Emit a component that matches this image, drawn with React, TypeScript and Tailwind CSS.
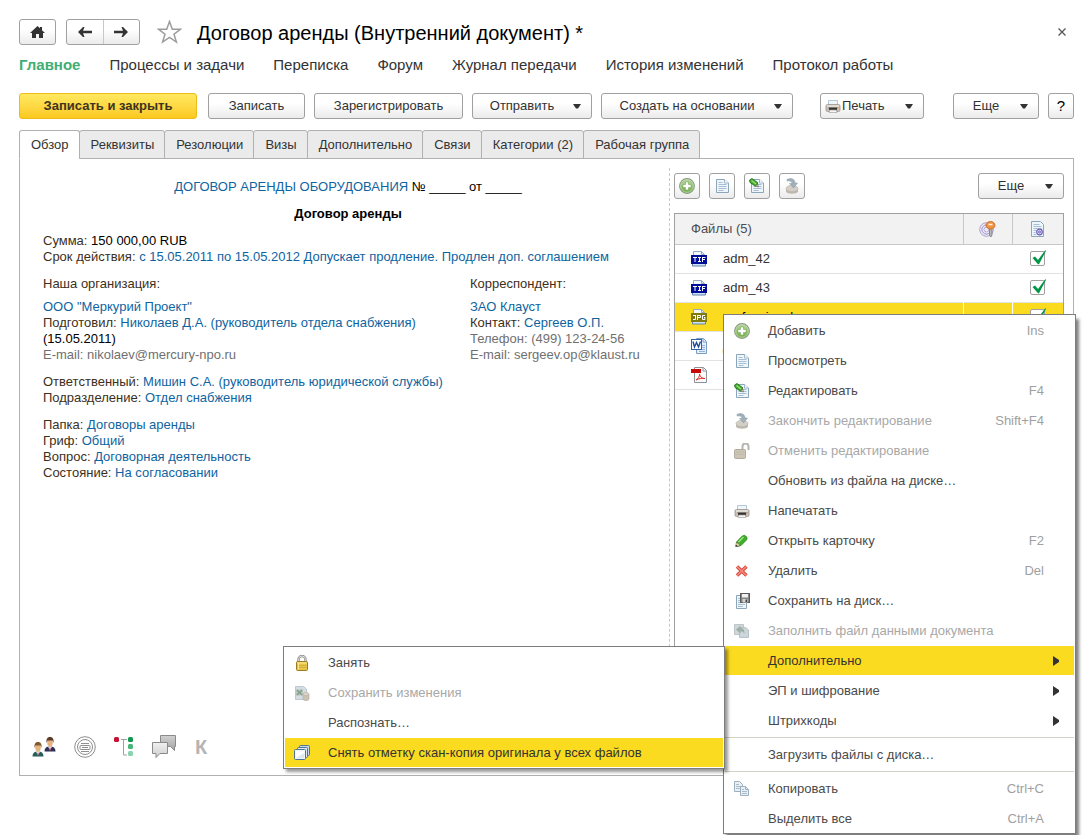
import type { ReactNode } from 'react'

const FONT = 'font-[Liberation_Sans,Arial,sans-serif]'
const BUTTON = 'h-[26px] shrink-0 rounded-[3px] border border-[#a0a0a0] bg-linear-to-b from-white from-40% to-[#ebebeb] text-[#333333] flex items-center justify-center'

interface MenuEntry {
    label: string
    icon?: ReactNode
    shortcut?: string
    disabled?: boolean
    active?: boolean
    children?: MenuEntry[]
    hasMore?: boolean
    separated?: boolean
}

function Caret() {
    return (
        <svg width="8" height="5" viewBox="0 0 8 5">
            <path d="M0 0h8L5 4.5H3z" fill="#333" />
        </svg>
    )
}

function DropButton({ label, className, icon }: { label: string; className: string; icon?: ReactNode }) {
    return (
        <button className={`${BUTTON} ${className}`}>
            {icon}
            <span className={`grow ${icon ? 'ml-px text-left' : 'mr-[10px] text-center'}`}>{label}</span>
            <Caret />
        </button>
    )
}

function AddIcon() {
    return (
        <svg width="16" height="16" viewBox="0 0 16 16">
            <defs>
                <linearGradient id="addFill" x1="0" y1="0" x2="0" y2="1">
                    <stop offset="0" stopColor="#b9d8a0" />
                    <stop offset="1" stopColor="#6cab42" />
                </linearGradient>
            </defs>
            <circle cx="8" cy="8" r="7.4" fill="url(#addFill)" stroke="#8c9a84" strokeWidth="1.1" />
            <circle cx="8" cy="8" r="6.3" fill="none" stroke="#c8e0b4" strokeWidth=".7" />
            <path d="M6.5 4h3v2.5H12v3H9.5V12h-3V9.5H4v-3h2.5z" fill="#fff" stroke="#6f9d50" strokeWidth=".5" />
        </svg>
    )
}

function Sheet() {
    return (
        <g transform="translate(2 1)">
            <path d="M.5.5h8L12.5 4v9.5H.5z" fill="#eef5fb" stroke="#8ba6b9" />
            <path d="M8.5.5V4h4" fill="#fff" stroke="#9eb5c5" />
            <path d="M2.5 3.5h4M2.5 5.5h8M2.5 7.5h8M2.5 9.5h8M2.5 11.5h5" stroke="#a6bfd4" />
        </g>
    )
}

function PageIcon() {
    return (
        <svg width="16" height="16" viewBox="0 0 16 16">
            <Sheet />
        </svg>
    )
}

function EditIcon() {
    return (
        <svg width="16" height="16" viewBox="0 0 16 16">
            <Sheet />
            <path d="M.5 2L3 .5l5.5 4v3L6 8 1 4.5z" fill="#41a92b" stroke="#1e6f18" strokeWidth=".8" />
            <path d="M2.5 2.5L7 6" stroke="#9be37c" strokeWidth="1.2" />
            <path d="M6.5 8L9.5 9 8.7 6z" fill="#e9dca5" stroke="#444" strokeWidth=".5" />
        </svg>
    )
}

function FinishIcon() {
    return (
        <svg width="16" height="16" viewBox="0 0 16 16">
            <path d="M2 10.5v3C3 16.500 13 16.500 14 13.500v-3z" fill="#bdb8ad" />
            <ellipse cx="8" cy="10.5" rx="6" ry="3.2" fill="#d3cfc6" stroke="#b7b2a7" strokeWidth=".6" />
            <path d="M3 1.5C7-.5 11 1 11 5h2.500L9.500 10 5.500 5.500H8C8 3.500 6 2.500 3 3z" fill="#9fb0bb" stroke="#8798a3" strokeWidth=".5" />
        </svg>
    )
}

function UnlockIcon() {
    return (
        <svg width="16" height="16" viewBox="0 0 16 16">
            <path d="M8.5 6.5v-3a3 3 0 0 1 6 0V7" fill="none" stroke="#b7b5b0" strokeWidth="2" />
            <rect x=".5" y="6.5" width="11" height="9" rx="1" fill="#ccc5b6" stroke="#b3ac9e" />
            <path d="M1.5 9h9M1.5 11.5h9" stroke="#bfb8aa" strokeWidth=".8" />
        </svg>
    )
}

function LockIcon() {
    return (
        <svg width="16" height="16" viewBox="0 0 16 16">
            <path d="M4.5 7V4.5a3.500 3.500 0 0 1 7 0V7" fill="none" stroke="#8b8b8b" strokeWidth="2.4" />
            <path d="M4.5 7V4.5a3.500 3.500 0 0 1 7 0V7" fill="none" stroke="#dedede" />
            <rect x="2.5" y="6.5" width="11" height="9" rx="1" fill="#e8c648" stroke="#a07a20" />
            <path d="M3.5 8h9" stroke="#fbee9e" />
            <path d="M3.5 10.5h9M3.5 12.5h9" stroke="#d2aa38" strokeWidth=".8" />
            <path d="M4.5 7.5v7" stroke="#fbe98c" />
        </svg>
    )
}

function PrinterIcon() {
    return (
        <svg width="16" height="16" viewBox="0 0 16 16" className="shrink-0">
            <path d="M3.5 7V2.500h9V7" fill="#eef6fb" stroke="#b4c8d6" />
            <rect x="1" y="6.500" width="14" height="7" rx="1.500" fill="#c9c2bb" stroke="#9a938d" strokeWidth=".8" />
            <path d="M2 8h12" stroke="#f2eeea" strokeWidth="1.200" />
            <path d="M3.500 9.500h9l-1 3.500h-7z" fill="#3a3532" />
            <path d="M4.500 12h7l.5 2.500H4z" fill="#f5f5f5" stroke="#9a938d" strokeWidth=".6" />
            <path d="M12.500 9.500H14" stroke="#e39a52" />
        </svg>
    )
}

function PencilIcon() {
    return (
        <svg width="16" height="16" viewBox="0 0 16 16">
            <path d="M2.500 9L8 3.200l2.500-.9 2.500 2-.3 2.500L7 12.500 3 13.500z" fill="#3fae2a" stroke="#24801a" strokeWidth=".8" />
            <path d="M4.500 9L9.500 4" stroke="#9fe585" strokeWidth="1.500" />
            <path d="M2.300 9.500l-.6 4L6 12.700 4.500 10.500z" fill="#e7d9a8" stroke="#5c5434" strokeWidth=".5" />
            <path d="M1.500 13.700l.4-2 1.700 1.500z" fill="#222" />
        </svg>
    )
}

function DeleteIcon() {
    return (
        <svg width="16" height="16" viewBox="0 0 16 16">
            <path d="M3 3.500l9.500 9M12.500 3.500l-9.500 9" stroke="#d5443a" strokeWidth="3.400" />
            <path d="M3 3.500l9.500 9M12.500 3.500l-9.500 9" stroke="#f58b7d" strokeWidth="1.700" />
        </svg>
    )
}

function SaveDiskIcon() {
    return (
        <svg width="16" height="16" viewBox="0 0 16 16">
            <path d="M2.500 2.500h10v13h-10z" fill="#eef5fb" stroke="#8ba6b9" />
            <path d="M4 5.500h3M4 7.500h3M4 9.500h7M4 11.500h7M4 13.500h5" stroke="#a6bfd4" />
            <rect x="6.500" y=".5" width="9" height="9" fill="#858585" stroke="#5a5a5a" />
            <rect x="8" y="1" width="6" height="3.500" fill="#f1f1f1" />
            <rect x="8.500" y="6" width="5" height="3.500" fill="#d4d4d4" />
            <rect x="11.500" y="6.500" width="1.500" height="2.500" fill="#444" />
        </svg>
    )
}

function FillIcon() {
    return (
        <svg width="16" height="16" viewBox="0 0 16 16">
            <path d="M.5 1.500h9v10h-9z" fill="#d0d6d9" stroke="#bcc5ca" />
            <path d="M5.500 4.500h6L14.500 7v7.500h-9z" fill="#ccd5da" stroke="#b5c1c8" />
            <path d="M2 6.500L6.500 2.500V5c3 0 4 2 4 6-1-2-2-2.800-4-2.800v2.600z" fill="#9db0a5" />
        </svg>
    )
}

function CopyIcon() {
    return (
        <svg width="16" height="16" viewBox="0 0 16 16">
            <path d="M.5.5h5l3 3v7h-8z" fill="#e8eff5" stroke="#9db0bf" />
            <path d="M2 3.500h3M2 5.500h5M2 7.500h5" stroke="#a9bccc" />
            <path d="M6.500 5.500h5l3 3v6h-8z" fill="#e8eff5" stroke="#9db0bf" />
            <path d="M11.500 5.500v3h3" fill="none" stroke="#9db0bf" />
            <path d="M8 8.500h2M8 10.500h5M8 12.500h5" stroke="#a9bccc" />
        </svg>
    )
}

function SaveChangesIcon() {
    return (
        <svg width="16" height="16" viewBox="0 0 16 16">
            <path d="M1.500 1.500h8L12.500 4v10.500h-11z" fill="#d3dde3" stroke="#bac8d0" />
            <path d="M2 4.500h7v6H2z" fill="#b6c6bb" />
            <path d="M3 5l5 5M8 5l-5 5" stroke="#839c8a" strokeWidth="1.300" />
            <path d="M9 9v5c0 2 6 2 6 0V9z" fill="#cbc2b6" stroke="#b6ac9f" strokeWidth=".6" />
            <ellipse cx="12" cy="9" rx="3" ry="1.500" fill="#dfd8ce" stroke="#b6ac9f" strokeWidth=".6" />
        </svg>
    )
}

function StackIcon() {
    return (
        <svg width="16" height="16" viewBox="0 0 16 16">
            <rect x="5.500" y=".5" width="10" height="10" rx="1" fill="#c7d9e6" stroke="#4e7596" />
            <rect x="3.500" y="2.500" width="10" height="10" rx="1" fill="#dbe7f0" stroke="#4e7596" />
            <rect x=".5" y="4.500" width="11" height="10" rx="1" fill="#f1f5f8" stroke="#4e7596" />
            <rect x="2" y="6" width="8" height="7" fill="#fff" />
            <path d="M2 13h8V8z" fill="#e0e8ee" />
        </svg>
    )
}

function ImageFileIcon({ kind }: { kind: 'TIF' | 'JPG' }) {
    const fill = kind === 'TIF' ? '#000d96' : '#7f7b0c'
    return (
        <svg width="16" height="16" viewBox="0 0 16 16">
            <path d="M2.500 5V.5h8l3 3V5" fill="#f3f8fc" stroke="#93aabd" />
            <path d="M10.500.5v3h3" fill="none" stroke="#93aabd" />
            <path d="M1.500 12v3h13v-3" fill="#cfe2f3" stroke="#5f84aa" />
            <rect y="4" width="16" height="9" fill={fill} />
            {kind === 'TIF' ? (
                <path d="M2 6.500h4M4 6v5M7 6.500h3M8.500 6v5M7 10.500h3M11.500 6v5M11 6.500h3.500M11 8.500h3" stroke="#fff" />
            ) : (
                <path d="M2 6.500h3M4.500 6v4.500H2M6.500 11V6M6.500 6.500h3v2H7M14 6.500h-2.500v4H14v-2h-1" fill="none" stroke="#fff" />
            )}
        </svg>
    )
}

function WordIcon() {
    return (
        <svg width="16" height="16" viewBox="0 0 16 16">
            <path d="M5.500.5h7l3 3v12h-10z" fill="#e6f0fb" stroke="#7c9cc4" />
            <path d="M12 1v3h3" fill="none" stroke="#7c9cc4" />
            <path d="M8 7.500h6M8 9.500h6M8 11.500h6M8 13.500h6" stroke="#92b2da" />
            <rect x=".5" y="1.500" width="10" height="10" fill="#fff" stroke="#3561a7" />
            <path d="M2 3.500L3.500 9l2-4.500 2 4.500 2-5.500" fill="none" stroke="#1e4b9b" strokeWidth="1.400" />
        </svg>
    )
}

function PdfIcon() {
    return (
        <svg width="16" height="16" viewBox="0 0 16 16">
            <path d="M3.500.5h9l3 3v12h-12z" fill="#fbfbfb" stroke="#8d9399" />
            <path d="M12 1v3h3" fill="#fff" stroke="#8d9399" />
            <rect y="2" width="10" height="4" fill="#c80a0a" />
            <path d="M5 13c2-1 4-4 3.500-6 .5 3 3 5 5.500 4.500-2-.8-6 0-9 1.500z" fill="none" stroke="#e42a2a" />
        </svg>
    )
}

function KeyIcon() {
    return (
        <svg width="17" height="16" viewBox="0 0 17 16">
            <circle cx="7.500" cy="8.500" r="6.800" fill="#eeebf6" stroke="#aaa0cf" />
            <circle cx="7.500" cy="8.500" r="4.600" fill="none" stroke="#9b90c7" />
            <circle cx="7.500" cy="8.500" r="2.500" fill="none" stroke="#b6add6" />
            <path d="M10.500 7H13v7l-1.200 2-1.300-2z" fill="#b9b9b9" stroke="#6e6e6e" strokeWidth=".7" />
            <ellipse cx="11.500" cy="4.300" rx="4.500" ry="3.800" fill="#ee9246" stroke="#c3641f" strokeWidth=".8" />
            <path d="M9.500 3.500h4" stroke="#fff0dd" strokeWidth="1.500" />
        </svg>
    )
}

function SealedPageIcon() {
    return (
        <svg width="16" height="16" viewBox="0 0 16 16">
            <path d="M1.500.5h9l3 3v12h-12z" fill="#eef5fb" stroke="#8ba6b9" />
            <path d="M3.500 3.500h6M3.500 5.500h8M3.500 7.500h8M3.500 9.500h3M3.500 11.500h2M3.500 13.500h3" stroke="#a6bfd4" />
            <circle cx="9.500" cy="11" r="2.800" fill="#e5e0f5" stroke="#6d5fb8" strokeWidth="1.200" />
            <circle cx="9.500" cy="11" r="1" fill="none" stroke="#6d5fb8" />
        </svg>
    )
}

function PeopleIcon() {
    const person = (suit: string, hair: string) => (
        <>
            <path d="M.5 14.500c0-3 1.500-4.500 4-5h3c2.500.5 4 2 4 5z" fill={suit} />
            <path d="M4 9.500l2 4 2-4z" fill="#fff" />
            <path d="M6 10.500v3" stroke="#b33" />
            <ellipse cx="6" cy="5.500" rx="2.800" ry="4" fill="#e6b27e" />
            <path d="M2.500 6C2 1 4 0 6 0s4.200 1 3.500 6l-1-2.500h-5z" fill={hair} />
        </>
    )
    return (
        <svg width="24" height="20" viewBox="0 0 24 20">
            <g transform="translate(12 0)">{person('#2c2f56', '#5b3a28')}</g>
            <g transform="translate(0 5)">{person('#235f5d', '#805a2e')}</g>
        </svg>
    )
}

function StampIcon() {
    return (
        <svg width="22" height="22" viewBox="0 0 22 22" fill="none" stroke="#8f8f8f">
            <circle cx="11" cy="11" r="10.300" />
            <circle cx="11" cy="11" r="7.500" />
            <rect x="6" y="9.500" width="10" height="4" rx="1" fill="#fff" />
            <path d="M7 7.500h8M7 15.500h8M8 11.500h6" />
        </svg>
    )
}

function TreeIcon() {
    return (
        <svg width="20" height="20" viewBox="0 0 20 20">
            <path d="M7 2.500h6M9.500 2.500v15.500H13" fill="none" stroke="#a0a0a0" />
            <rect width="5" height="5" rx="1.500" fill="#c4122f" />
            <rect x="14" width="5" height="5" rx="1.500" fill="#109a50" />
            <rect x="14" y="7" width="5" height="5" rx="1.500" fill="#46b67b" />
            <rect x="14" y="14" width="5" height="5" rx="1.500" fill="#8bd3ae" />
        </svg>
    )
}

function ChatIcon() {
    return (
        <svg width="25" height="24" viewBox="0 0 25 24">
            <defs>
                <linearGradient id="chatBack" x1="0" y1="0" x2="0" y2="1">
                    <stop offset="0" stopColor="#d0d0d0" />
                    <stop offset="1" stopColor="#a4a4a4" />
                </linearGradient>
                <linearGradient id="chatFront" x1="0" y1="0" x2="0" y2="1">
                    <stop offset="0" stopColor="#f0f0f0" />
                    <stop offset="1" stopColor="#cfcfcf" />
                </linearGradient>
            </defs>
            <path d="M8.500.5h15v11h-1v4l-4-4h-10z" fill="url(#chatBack)" stroke="#8a8a8a" />
            <path d="M.5 7.500h15v11H8l-4 4v-4H.5z" fill="url(#chatFront)" stroke="#8a8a8a" />
        </svg>
    )
}

const SUBMENU: MenuEntry[] = [
    { label: 'Занять', icon: <LockIcon /> },
    { label: 'Сохранить изменения', icon: <SaveChangesIcon />, disabled: true },
    { label: 'Распознать…' },
    { label: 'Снять отметку скан-копия оригинала у всех файлов', icon: <StackIcon />, active: true },
]

const MENU: MenuEntry[] = [
    { label: 'Добавить', icon: <AddIcon />, shortcut: 'Ins' },
    { label: 'Просмотреть', icon: <PageIcon /> },
    { label: 'Редактировать', icon: <EditIcon />, shortcut: 'F4' },
    { label: 'Закончить редактирование', icon: <FinishIcon />, shortcut: 'Shift+F4', disabled: true },
    { label: 'Отменить редактирование', icon: <UnlockIcon />, disabled: true },
    { label: 'Обновить из файла на диске…' },
    { label: 'Напечатать', icon: <PrinterIcon /> },
    { label: 'Открыть карточку', icon: <PencilIcon />, shortcut: 'F2' },
    { label: 'Удалить', icon: <DeleteIcon />, shortcut: 'Del' },
    { label: 'Сохранить на диск…', icon: <SaveDiskIcon /> },
    { label: 'Заполнить файл данными документа', icon: <FillIcon />, disabled: true },
    { label: 'Дополнительно', active: true, hasMore: true, children: SUBMENU },
    { label: 'ЭП и шифрование', hasMore: true },
    { label: 'Штрихкоды', hasMore: true },
    { label: 'Загрузить файлы с диска…', separated: true },
    { label: 'Копировать', icon: <CopyIcon />, shortcut: 'Ctrl+C', separated: true },
    { label: 'Выделить все', shortcut: 'Ctrl+A' },
]

function MenuRow({ item }: { item: MenuEntry }) {
    return (
        <li className={`relative ${item.separated ? 'mt-1' : ''}`}>
            {item.separated && <hr className="absolute -top-0.5 inset-x-0 border-[#d3d3c8]" />}
            <div className="pt-px">
                <button
                    disabled={item.disabled}
                    className={`flex h-[29px] w-full items-center pr-[15px] pl-[9px] text-left ${item.active ? 'bg-[#fbdb20] text-[#333333]' : item.disabled ? 'text-[#a8a8a8]' : 'text-[#4a4a4a]'}`}
                >
                    <span className="mr-[18px] w-4 shrink-0">{item.icon}</span>
                    <span className="grow whitespace-nowrap">{item.label}</span>
                    {item.shortcut && <span className="pr-[15px] text-[#a0a0a0]">{item.shortcut}</span>}
                    {item.hasMore && (
                        <svg width="6" height="10" viewBox="0 0 6 10">
                            <path d="M0 0l6 4v2l-6 4z" fill="#333" />
                        </svg>
                    )}
                </button>
            </div>
            {item.children && (
                <Menu items={item.children} className="top-px right-full w-[442px] pb-px shadow-[3px_3px_3px_rgba(0,0,0,0.4)]" />
            )}
        </li>
    )
}

function Menu({ items, className }: { items: MenuEntry[]; className: string }) {
    return (
        <ul className={`absolute z-10 border border-[#7d7d7d] bg-white px-px ${className}`}>
            {items.map((item) => (
                <MenuRow key={item.label} item={item} />
            ))}
        </ul>
    )
}

const FILES = [
    { name: 'adm_42', icon: <ImageFileIcon kind="TIF" />, original: true },
    { name: 'adm_43', icon: <ImageFileIcon kind="TIF" />, original: true },
    { name: 'professional', icon: <ImageFileIcon kind="JPG" />, original: true, selected: true },
    { name: 'Договор', icon: <WordIcon />, original: false },
    { name: 'Приложение', icon: <PdfIcon />, original: false },
]

function FilesTable() {
    return (
        <div className="grow border border-[#a0a0a0]">
            <table className="w-full table-fixed border-collapse">
                <thead>
                    <tr className="h-[30px] border-b border-[#c8c8c8] bg-[#f2f2f2] text-[#4d4d4d]">
                        <th className="pl-4 text-left font-normal">Файлы (5)</th>
                        <th className="w-[49px] border-l border-[#c8c8c8]">
                            <span className="flex justify-center"><KeyIcon /></span>
                        </th>
                        <th className="w-[51px] border-l border-[#c8c8c8]">
                            <span className="flex justify-center"><SealedPageIcon /></span>
                        </th>
                    </tr>
                </thead>
                <tbody>
                    {FILES.map((file) => (
                        <tr key={file.name} className={`h-[29px] border-b border-[#e2e2e2] ${file.selected ? 'bg-[#fbdb20] text-black' : 'text-[#333333]'}`}>
                            <td className="pl-4">
                                <span className="flex items-center gap-4">{file.icon}{file.name}</span>
                            </td>
                            <td className={file.selected ? 'border-l border-white' : ''} />
                            <td className={file.selected ? 'border-l border-white' : ''}>
                                <label className="relative mx-auto block size-4">
                                    <input
                                        type="checkbox"
                                        aria-label={file.name}
                                        defaultChecked={file.original}
                                        className="peer block size-[15px] appearance-none rounded-xs border border-[#a0a0a0] bg-white"
                                    />
                                    <svg width="15" height="15" viewBox="0 0 15 15" className="pointer-events-none absolute bottom-0.5 left-0.5 hidden peer-checked:block">
                                        <path d="M.5 8l2.500-1.500 3 3.500L13 .5h1.200L7 14.200H6z" fill="#009646" />
                                    </svg>
                                </label>
                            </td>
                        </tr>
                    ))}
                </tbody>
            </table>
        </div>
    )
}

function Link({ children }: { children: ReactNode }) {
    return <a href="#" className="text-[#0f649f]">{children}</a>
}

function Overview() {
    return (
        <section className="flex min-w-0 grow flex-col pt-5 pr-4 pb-[14px] pl-[23px] leading-4 text-[#3d2f1a]">
            <p className="text-center text-black">
                <Link>ДОГОВОР АРЕНДЫ ОБОРУДОВАНИЯ</Link> № _____ от _____
            </p>
            <h2 className="mt-[11px] text-center font-bold text-black">Договор аренды</h2>
            <p className="mt-[11px]">Сумма: <span className="text-black">150 000,00 RUB</span></p>
            <p>Срок действия: <Link>с 15.05.2011 по 15.05.2012 Допускает продление. Продлен доп. соглашением</Link></p>
            <div className="mt-[11px] grid grid-cols-[7fr_3fr]">
                <div>
                    <p className="mb-[7px]">Наша организация:</p>
                    <p><Link>ООО "Меркурий Проект"</Link></p>
                    <p>Подготовил: <Link>Николаев Д.А. (руководитель отдела снабжения)</Link></p>
                    <p className="text-black">(15.05.2011)</p>
                    <p className="text-[#707070]">E-mail: nikolaev@mercury-npo.ru</p>
                </div>
                <div>
                    <p className="mb-[7px]">Корреспондент:</p>
                    <p><Link>ЗАО Клауст</Link></p>
                    <p>Контакт: <Link>Сергеев О.П.</Link></p>
                    <p className="text-[#707070]">Телефон: (499) 123-24-56</p>
                    <p className="text-[#707070]">E-mail: sergeev.op@klaust.ru</p>
                </div>
            </div>
            <p className="mt-[11px]">Ответственный: <Link>Мишин С.А. (руководитель юридической службы)</Link></p>
            <p>Подразделение: <Link>Отдел снабжения</Link></p>
            <p className="mt-[11px]">Папка: <Link>Договоры аренды</Link></p>
            <p>Гриф: <Link>Общий</Link></p>
            <p>Вопрос: <Link>Договорная деятельность</Link></p>
            <p>Состояние: <Link>На согласовании</Link></p>
            <div className="mt-auto -ml-[11px] flex items-center gap-[18px]">
                <button aria-label="Участники"><PeopleIcon /></button>
                <button aria-label="Печать"><StampIcon /></button>
                <button aria-label="Структура"><TreeIcon /></button>
                <button aria-label="Форум"><ChatIcon /></button>
                <button className="text-xl font-bold text-[#b4b4b4]">К</button>
            </div>
        </section>
    )
}

const NAV = ['Главное', 'Процессы и задачи', 'Переписка', 'Форум', 'Журнал передачи', 'История изменений', 'Протокол работы']
const TABS = ['Обзор', 'Реквизиты', 'Резолюции', 'Визы', 'Дополнительно', 'Связи', 'Категории (2)', 'Рабочая группа']

export default function App() {
    return (
        <div className={`${FONT} bg-white pt-[19px] pr-[10px] pb-[59px] pl-[19px] text-[13px] text-[#333333]`}>
            <header className="flex h-[26px] items-center">
                <button aria-label="Домой" className={`${BUTTON} w-[37px]`}>
                    <svg width="15" height="12" viewBox="0 0 15 12">
                        <path d="M7.500 0L10 2.300V1h2v3.200L15 7h-2v5H9V8H6v4H2V7H0z" fill="#333" />
                    </svg>
                </button>
                <div className={`${BUTTON} ml-[10px] w-[74px]`}>
                    <button aria-label="Назад" className="flex h-full flex-1 items-center justify-center border-r border-[#c8c8c8]">
                        <svg width="14" height="10" viewBox="0 0 14 10">
                            <path d="M0 5l5-5h1.500L5 3.800h9v2.400H5L6.500 10H5z" fill="#333" />
                        </svg>
                    </button>
                    <button aria-label="Вперед" className="flex h-full flex-1 items-center justify-center">
                        <svg width="14" height="10" viewBox="0 0 14 10">
                            <path d="M14 5L9 0H7.500L9 3.800H0v2.400h9L7.500 10H9z" fill="#333" />
                        </svg>
                    </button>
                </div>
                <button aria-label="В избранное" className="ml-[17px]">
                    <svg width="25" height="24" viewBox="0 0 25 24">
                        <path d="M12.500 1.500l2.800 7.700h8.200l-6.500 5 2.400 7.800-6.900-4.600L5.600 22 8 14.200l-6.500-5h8.200z" fill="#fff" stroke="#9c9c9c" strokeWidth="1.500" />
                    </svg>
                </button>
                <h1 className="ml-[15px] grow pt-0.5 text-xl text-black">Договор аренды (Внутренний документ) *</h1>
                <button aria-label="Закрыть" className="mr-2">
                    <svg width="8" height="8" viewBox="0 0 8 8">
                        <path d="M.5.5l7 7M7.500.5l-7 7" stroke="#555" strokeWidth="1.300" />
                    </svg>
                </button>
            </header>

            <nav className="mt-[10px] flex h-5 items-center gap-[29px] text-[15px]">
                {NAV.map((item, i) => (
                    <a key={item} href="#" className={i === 0 ? 'font-bold text-[#3fae74]' : ''}>{item}</a>
                ))}
            </nav>

            <div className="mt-[18px] flex gap-[9px]">
                <button className="mr-0.5 h-[26px] w-[178px] rounded-[3px] border border-[#eebb1c] bg-linear-to-b from-[#ffe95e] to-[#fbc91c] font-bold text-[#3d3420]">
                    Записать и закрыть
                </button>
                <button className={`${BUTTON} w-[97px]`}>Записать</button>
                <button className={`${BUTTON} w-[149px]`}>Зарегистрировать</button>
                <DropButton label="Отправить" className="w-[120px] pr-[10px] pl-2" />
                <DropButton label="Создать на основании" className="w-[192px] pr-[10px] pl-2" />
                <DropButton label="Печать" className="ml-[18px] w-[104px] pr-[10px] pl-1" icon={<PrinterIcon />} />
                <DropButton label="Еще" className="ml-auto w-[86px] pr-[10px] pl-2" />
                <button className={`${BUTTON} w-[26px] text-[15px] text-black`}>?</button>
            </div>

            <div className="relative z-10 mt-[11px] flex" role="tablist">
                {TABS.map((tab, i) => (
                    <button
                        key={tab}
                        role="tab"
                        aria-selected={i === 0}
                        className={`-mr-px h-[29px] rounded-t-[3px] border border-[#b0b0b0] pr-[10px] pl-[11px] ${i === 0 ? 'border-b-white bg-white' : 'bg-[#ebebeb]'}`}
                    >
                        {tab}
                    </button>
                ))}
            </div>

            <main className="relative -mt-px flex min-h-[618px] border border-[#b0b0b0]">
                <Overview />
                <aside className="mt-[9px] mb-2 flex w-[404px] shrink-0 flex-col border-l border-dashed border-[#c8c8c8] pt-[5px] pr-[9px] pl-1">
                    <div className="mb-[14px] flex gap-[9px]">
                        <button aria-label="Добавить файл" className={`${BUTTON} w-[26px]`}><AddIcon /></button>
                        <button aria-label="Просмотреть файл" className={`${BUTTON} w-[26px]`}><PageIcon /></button>
                        <button aria-label="Редактировать файл" className={`${BUTTON} w-[26px]`}><EditIcon /></button>
                        <button aria-label="Закончить" className={`${BUTTON} w-[26px]`}><FinishIcon /></button>
                        <DropButton label="Еще" className="ml-auto w-[86px] pr-[10px] pl-2" />
                    </div>
                    <FilesTable />
                </aside>
                <Menu items={MENU} className="top-[155px] -right-[3px] w-[353px] shadow-[3px_5px_3px_rgba(0,0,0,0.5)]" />
            </main>
        </div>
    )
}
